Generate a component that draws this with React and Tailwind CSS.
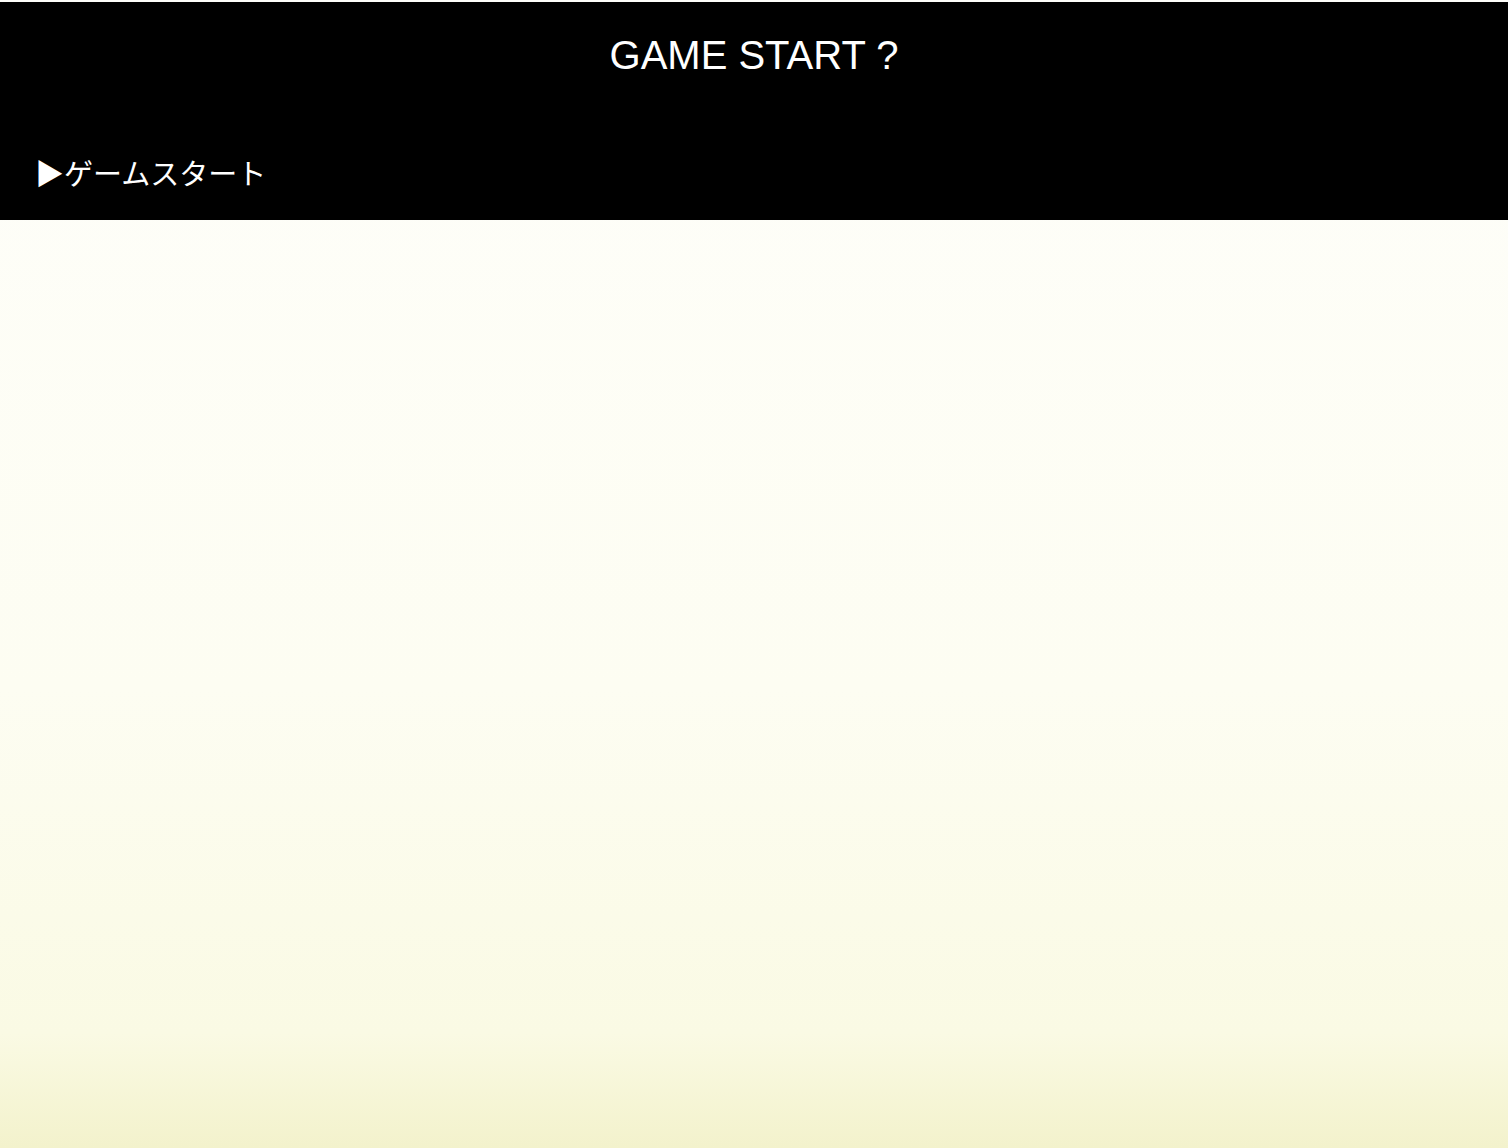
import React from "react";

function App() {
  return (
    <div className="min-h-[1148px] w-full pt-[2px] bg-[linear-gradient(to_bottom,#fefefa_0%,#fdfdf2_60%,#fafae4_90%,#f3f2cc_100%)]">
      {/* title panel */}
      <div
        className="h-[218px] bg-black text-white pt-[28px]"
        style={{ fontFamily: '"Liberation Sans", "Noto Sans CJK JP", sans-serif' }}
      >
        <h1 className="text-center text-[40px] leading-[50px] font-normal">
          GAME START ?
        </h1>
        <div className="mt-[72px] pl-[35px] text-[29px] leading-[40px]">
          <span style={{ fontFamily: '"Noto Sans CJK JP", sans-serif' }}>
            ▶ゲームスタート
          </span>
        </div>
      </div>
    </div>
  );
}

export default App;
